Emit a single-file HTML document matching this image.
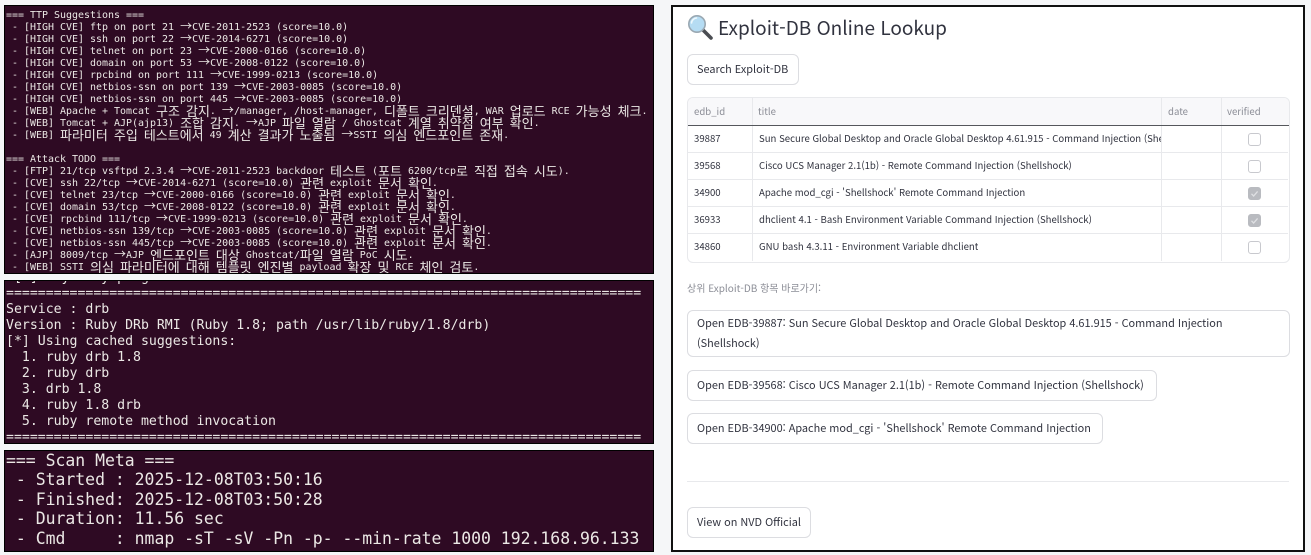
<!DOCTYPE html>
<html lang="ko">
<head>
<meta charset="utf-8">
<title>Exploit-DB Online Lookup</title>
<style>
html,body{margin:0;padding:0;width:1311px;height:555px;overflow:hidden;background:#f5f6f8}
.t{position:absolute;left:4px;width:648px;background:#2e0a23;border:1px solid #000;overflow:hidden}
.t pre{position:absolute;left:1px;margin:0;color:#ebe8e5;font-family:"DejaVu Sans Mono","Liberation Mono",monospace;white-space:pre}
.t b{font-weight:400;font-family:"Noto Sans CJK KR",sans-serif;font-size:13px;line-height:0;color:#ebe8e5;position:relative;top:2px}
.t i{font-style:normal;font-family:"Noto Sans CJK KR",sans-serif;font-size:12px;line-height:0;color:#ebe8e5}
#p1 pre{font-size:9.97px;line-height:12px;top:4px}
#p2 pre{font-size:13.2px;line-height:16px;top:-11px}
#p3 pre{font-size:16.45px;line-height:19.6px;top:-0.5px}
#r{position:absolute;left:671px;top:5px;width:630px;height:543px;background:#fff;border:2px solid #111}
.s{position:absolute;font-family:"Noto Sans CJK KR","Liberation Sans",sans-serif;color:#31333f;white-space:nowrap}
.btn{position:absolute;box-sizing:border-box;background:#fff;border:1px solid #dcdde1;border-radius:6px;font-family:"Noto Sans CJK KR","Liberation Sans",sans-serif;font-size:10.9px;line-height:20px;color:#31333f;padding:3.5px 9px;white-space:nowrap}
.line{position:absolute;background:#e8e9ec}
.cell{position:absolute;font-family:"Noto Sans CJK KR","Liberation Sans",sans-serif;font-size:9.6px;line-height:14px;color:#31333f;white-space:nowrap;overflow:hidden}
.h{color:#8b8d96}
.cb{position:absolute;left:1248px;width:11px;height:11px;border:1px solid #c8c9ce;border-radius:3px;background:#fff}
.cb.on{background:#b9bbc0;border-color:#b9bbc0}
.cb svg{position:absolute;left:0;top:0}
</style>
</head>
<body>
<div class="t" id="p1" style="top:5px;height:267px"><pre>=== TTP Suggestions ===
 - [HIGH CVE] ftp on port 21 <i>→</i>CVE-2011-2523 (score=10.0)
 - [HIGH CVE] ssh on port 22 <i>→</i>CVE-2014-6271 (score=10.0)
 - [HIGH CVE] telnet on port 23 <i>→</i>CVE-2000-0166 (score=10.0)
 - [HIGH CVE] domain on port 53 <i>→</i>CVE-2008-0122 (score=10.0)
 - [HIGH CVE] rpcbind on port 111 <i>→</i>CVE-1999-0213 (score=10.0)
 - [HIGH CVE] netbios-ssn on port 139 <i>→</i>CVE-2003-0085 (score=10.0)
 - [HIGH CVE] netbios-ssn on port 445 <i>→</i>CVE-2003-0085 (score=10.0)
 - [WEB] Apache + Tomcat <b>구조</b> <b>감지</b>. <i>→</i>/manager, /host-manager, <b>디폴트</b> <b>크리덴셜</b>, WAR <b>업로드</b> RCE <b>가능성</b> <b>체크</b>.
 - [WEB] Tomcat + AJP(ajp13) <b>조합</b> <b>감지</b>. <i>→</i>AJP <b>파일</b> <b>열람</b> / Ghostcat <b>계열</b> <b>취약점</b> <b>여부</b> <b>확인</b>.
 - [WEB] <b>파라미터</b> <b>주입</b> <b>테스트에서</b> 49 <b>계산</b> <b>결과가</b> <b>노출됨</b> <i>→</i>SSTI <b>의심</b> <b>엔드포인트</b> <b>존재</b>.

=== Attack TODO ===
 - [FTP] 21/tcp vsftpd 2.3.4 <i>→</i>CVE-2011-2523 backdoor <b>테스트</b> (<b>포트</b> 6200/tcp<b>로</b> <b>직접</b> <b>접속</b> <b>시도</b>).
 - [CVE] ssh 22/tcp <i>→</i>CVE-2014-6271 (score=10.0) <b>관련</b> exploit <b>문서</b> <b>확인</b>.
 - [CVE] telnet 23/tcp <i>→</i>CVE-2000-0166 (score=10.0) <b>관련</b> exploit <b>문서</b> <b>확인</b>.
 - [CVE] domain 53/tcp <i>→</i>CVE-2008-0122 (score=10.0) <b>관련</b> exploit <b>문서</b> <b>확인</b>.
 - [CVE] rpcbind 111/tcp <i>→</i>CVE-1999-0213 (score=10.0) <b>관련</b> exploit <b>문서</b> <b>확인</b>.
 - [CVE] netbios-ssn 139/tcp <i>→</i>CVE-2003-0085 (score=10.0) <b>관련</b> exploit <b>문서</b> <b>확인</b>.
 - [CVE] netbios-ssn 445/tcp <i>→</i>CVE-2003-0085 (score=10.0) <b>관련</b> exploit <b>문서</b> <b>확인</b>.
 - [AJP] 8009/tcp <i>→</i>AJP <b>엔드포인트</b> <b>대상</b> Ghostcat/<b>파일</b> <b>열람</b> PoC <b>시도</b>.
 - [WEB] SSTI <b>의심</b> <b>파라미터에</b> <b>대해</b> <b>템플릿</b> <b>엔진별</b> payload <b>확장</b> <b>및</b> RCE <b>체인</b> <b>검토</b>.</pre></div>

<div class="t" id="p2" style="top:280px;height:162px"><pre> [*] Try ruby plug
================================================================================
Service : drb
Version : Ruby DRb RMI (Ruby 1.8; path /usr/lib/ruby/1.8/drb)
[*] Using cached suggestions:
  1. ruby drb 1.8
  2. ruby drb
  3. drb 1.8
  4. ruby 1.8 drb
  5. ruby remote method invocation
================================================================================</pre></div>

<div class="t" id="p3" style="top:450px;height:100px"><pre>=== Scan Meta ===
 - Started : 2025-12-08T03:50:16
 - Finished: 2025-12-08T03:50:28
 - Duration: 11.56 sec
 - Cmd     : nmap -sT -sV -Pn -p- --min-rate 1000 192.168.96.133</pre></div>

<div id="r"></div>

<svg style="position:absolute;left:686px;top:14px" width="28" height="27" viewBox="0 0 28 27">
<line x1="16" y1="15" x2="25" y2="24" stroke="#4a4d52" stroke-width="3.6" stroke-linecap="round"/>
<circle cx="11" cy="10" r="8.2" fill="#b5dcf3" stroke="#9aa8b2" stroke-width="1.6"/>
<path d="M5.5 9a5.5 5.5 0 0 1 5-5" fill="none" stroke="#eef8fd" stroke-width="1.6" stroke-linecap="round"/>
</svg>
<div class="s" style="left:718px;top:12px;font-size:19px;line-height:32px">Exploit-DB Online Lookup</div>

<div class="btn" style="left:687px;top:54px;width:112px;height:31px">Search Exploit-DB</div>

<div style="position:absolute;left:687px;top:97px;width:601px;height:164px;border:1px solid #e8e9ec;border-radius:6px;overflow:hidden;background:#fff">
  <div style="position:absolute;left:0;top:0;width:601px;height:27px;background:#f8f8fa"></div>
  <div style="position:absolute;left:0;top:27px;width:601px;height:1px;background:#55575c"></div>
</div>
<div class="line" style="left:688px;top:152px;width:600px;height:1px"></div>
<div class="line" style="left:688px;top:179px;width:600px;height:1px"></div>
<div class="line" style="left:688px;top:206px;width:600px;height:1px"></div>
<div class="line" style="left:688px;top:233px;width:600px;height:1px"></div>
<div class="line" style="left:752px;top:98px;width:1px;height:163px"></div>
<div class="line" style="left:1161px;top:98px;width:1px;height:163px"></div>
<div class="line" style="left:1221px;top:98px;width:1px;height:163px"></div>
<div style="position:absolute;left:752px;top:125px;width:470px;height:1px;background:#55575c"></div>

<div class="cell h" style="left:694px;top:104px">edb_id</div>
<div class="cell h" style="left:758px;top:104px">title</div>
<div class="cell h" style="left:1168px;top:104px">date</div>
<div class="cell h" style="left:1227px;top:104px">verified</div>

<div class="cell" style="left:694px;top:131px">39887</div>
<div class="cell" style="left:759px;top:131px;width:402px">Sun Secure Global Desktop and Oracle Global Desktop 4.61.915 - Command Injection (Shellshock)</div>
<div class="cell" style="left:694px;top:158px">39568</div>
<div class="cell" style="left:759px;top:158px">Cisco UCS Manager 2.1(1b) - Remote Command Injection (Shellshock)</div>
<div class="cell" style="left:694px;top:185px">34900</div>
<div class="cell" style="left:759px;top:185px">Apache mod_cgi - 'Shellshock' Remote Command Injection</div>
<div class="cell" style="left:694px;top:212px">36933</div>
<div class="cell" style="left:759px;top:212px">dhclient 4.1 - Bash Environment Variable Command Injection (Shellshock)</div>
<div class="cell" style="left:694px;top:239px">34860</div>
<div class="cell" style="left:759px;top:239px">GNU bash 4.3.11 - Environment Variable dhclient</div>

<div class="cb" style="top:133px"></div>
<div class="cb" style="top:160px"></div>
<div class="cb on" style="top:187px"><svg width="11" height="11" viewBox="0 0 11 11"><path d="M2.5 5.8 4.6 8 8.6 3.4" fill="none" stroke="#dfe0e3" stroke-width="1.3"/></svg></div>
<div class="cb on" style="top:214px"><svg width="11" height="11" viewBox="0 0 11 11"><path d="M2.5 5.8 4.6 8 8.6 3.4" fill="none" stroke="#dfe0e3" stroke-width="1.3"/></svg></div>
<div class="cb" style="top:241px"></div>

<div class="s" style="left:687px;top:281px;font-size:10px;line-height:14px;color:#8b8d96">상위 Exploit-DB 항목 바로가기:</div>

<div class="btn" style="left:687px;top:310px;width:603px;height:47px;padding-top:2px">Open EDB-39887: Sun Secure Global Desktop and Oracle Global Desktop 4.61.915 - Command Injection<br>(Shellshock)</div>
<div class="btn" style="left:687px;top:370px;width:470px;height:31px">Open EDB-39568: Cisco UCS Manager 2.1(1b) - Remote Command Injection (Shellshock)</div>
<div class="btn" style="left:687px;top:413px;width:416px;height:31px">Open EDB-34900: Apache mod_cgi - 'Shellshock' Remote Command Injection</div>

<div class="line" style="left:687px;top:481px;width:602px;height:1px"></div>

<div class="btn" style="left:687px;top:507px;width:124px;height:31px">View on NVD Official</div>
</body>
</html>
